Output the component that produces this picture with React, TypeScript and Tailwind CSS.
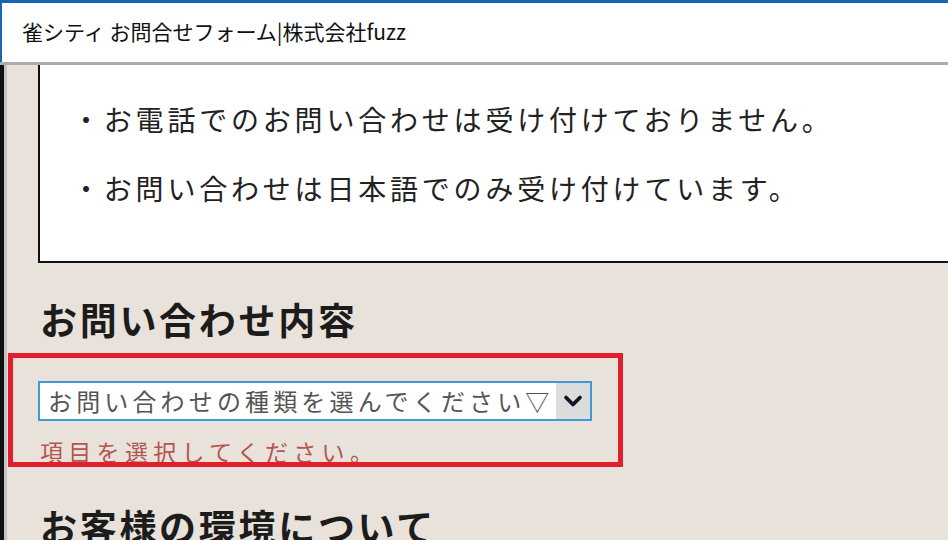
import { ChevronDown } from 'lucide-react';

const notes = [
  'お電話でのお問い合わせは受け付けておりません。',
  'お問い合わせは日本語でのみ受け付けています。',
];

export default function App() {
  return (
    <div className="relative flex h-[540px] w-[948px] flex-col overflow-hidden bg-white font-['Noto_Sans_CJK_JP','Noto_Sans',sans-serif]">
      {/* window title bar */}
      <div className="flex h-[62px] shrink-0 items-center border-t-[3px] border-l-2 border-[#1565b0] bg-white pb-[2px] pl-5">
        <span className="text-[21px] text-[#111]">雀シティ お問合せフォーム|株式会社fuzz</span>
      </div>
      <div className="h-[3px] shrink-0 bg-[#acacb0]" />

      <div className="flex min-h-0 flex-1">
        <div className="w-[4px] bg-[#111]" />
        <div className="w-[3px] bg-[#c4c4c4]" />

        <div className="flex flex-1 flex-col bg-[#e8e2da] pl-[31px]">
          {/* notice box */}
          <div className="flex h-[198px] shrink-0 flex-col gap-[29px] border-b-2 border-l-2 border-[#111] bg-white pl-[32px] pt-[34px]">
            {notes.map((n) => (
              <p key={n} className="text-[28px] leading-[40px] tracking-[3.8px] text-[#222]">
                ・{n}
              </p>
            ))}
          </div>

          <h2 className="mt-[34px] pl-[2px] text-[37px] font-bold leading-[44px] tracking-[2.7px] text-[#1c1c1c]">
            お問い合わせ内容
          </h2>

          <div className="mt-[40px] flex h-[51px] w-[554px] items-stretch border-2 border-[#3d9ad6] bg-white">
            <span className="flex flex-1 items-center pl-[8px] text-[24px] tracking-[4.15px] text-[#555]">
              お問い合わせの種類を選んでください▽
            </span>
            <span className="flex w-[34px] items-center justify-center bg-[#dcdcdc]">
              <ChevronDown className="h-[28px] w-[28px] text-[#141428]" strokeWidth={3.2} />
            </span>
          </div>

          <p className="mt-[14px] pl-[2px] text-[23px] leading-[33px] tracking-[5.3px] text-[#b5554f]">
            項目を選択してください。
          </p>

          <h2 className="mt-[36px] pl-[2px] text-[37px] font-bold leading-[44px] tracking-[2.7px] text-[#1c1c1c]">
            お客様の環境について
          </h2>
        </div>
      </div>

      {/* annotation frame */}
      <div className="absolute left-[8px] top-[353px] h-[114px] w-[615px] border-[5px] border-[#e21f2b]" />
    </div>
  );
}
